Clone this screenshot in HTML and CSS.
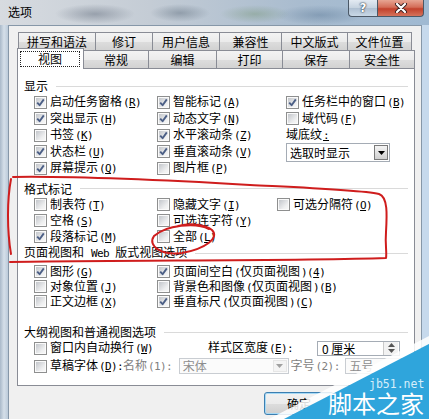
FILE: index.html
```html
<!DOCTYPE html>
<html lang="zh-CN">
<head>
<meta charset="utf-8">
<title>选项</title>
<link rel="stylesheet" href="styles.css">
</head>
<body>
<div class="screen">
  <div class="titlebar">
    <span class="title">选项</span>
    <div class="caption">
      <span class="cap-btn help">?</span>
      <span class="cap-btn close">
        <svg width="14" height="10" viewBox="0 0 14 10"><path d="M3 1 L11 9 M11 1 L3 9" stroke="#3b1f1f" stroke-width="4" stroke-linecap="round"/><path d="M3 1 L11 9 M11 1 L3 9" stroke="#fff" stroke-width="2.2" stroke-linecap="round"/></svg>
      </span>
    </div>
  </div>
  <div class="frame">
    <div class="client">
      <div class="tabs">
        <div class="tabrow back">
          <div class="tab" style="width:78px">拼写和语法</div>
          <div class="tab" style="width:58px">修订</div>
          <div class="tab" style="width:68px">用户信息</div>
          <div class="tab" style="width:63px">兼容性</div>
          <div class="tab" style="width:67px">中文版式</div>
          <div class="tab" style="width:65px">文件位置</div>
        </div>
        <div class="tabrow front">
          <div class="tab sel" style="width:67px"><span class="focus">视图</span></div>
          <div class="tab" style="width:66px">常规</div>
          <div class="tab" style="width:69px">编辑</div>
          <div class="tab" style="width:67px">打印</div>
          <div class="tab" style="width:68px">保存</div>
          <div class="tab" style="width:66px">安全性</div>
        </div>
      </div>
      <div class="panel">
        <section class="group g1">
          <div class="heading"><span>显示</span></div>
          <div class="grid cols-a">
            <label class="cb"><span class="box"><svg viewBox="0 0 9 9"><path d="M1.2 4.6 L3.6 7.2 L7.8 1.4"/></svg></span><span>启动任务窗格<span class="k">(<u>R</u>)</span></span></label>
            <label class="cb"><span class="box"><svg viewBox="0 0 9 9"><path d="M1.2 4.6 L3.6 7.2 L7.8 1.4"/></svg></span><span>智能标记<span class="k">(<u>A</u>)</span></span></label>
            <label class="cb"><span class="box"><svg viewBox="0 0 9 9"><path d="M1.2 4.6 L3.6 7.2 L7.8 1.4"/></svg></span><span>任务栏中的窗口<span class="k">(<u>B</u>)</span></span></label>

            <label class="cb"><span class="box"><svg viewBox="0 0 9 9"><path d="M1.2 4.6 L3.6 7.2 L7.8 1.4"/></svg></span><span>突出显示<span class="k">(<u>H</u>)</span></span></label>
            <label class="cb"><span class="box"><svg viewBox="0 0 9 9"><path d="M1.2 4.6 L3.6 7.2 L7.8 1.4"/></svg></span><span>动态文字<span class="k">(<u>N</u>)</span></span></label>
            <label class="cb"><span class="box"></span><span>域代码<span class="k">(<u>F</u>)</span></span></label>

            <label class="cb"><span class="box"></span><span>书签<span class="k">(<u>K</u>)</span></span></label>
            <label class="cb"><span class="box"><svg viewBox="0 0 9 9"><path d="M1.2 4.6 L3.6 7.2 L7.8 1.4"/></svg></span><span>水平滚动条<span class="k">(<u>Z</u>)</span></span></label>
            <div class="plain"><span>域底纹<span class="k"><u>:</u></span></span></div>

            <label class="cb"><span class="box"><svg viewBox="0 0 9 9"><path d="M1.2 4.6 L3.6 7.2 L7.8 1.4"/></svg></span><span>状态栏<span class="k">(<u>U</u>)</span></span></label>
            <label class="cb"><span class="box"><svg viewBox="0 0 9 9"><path d="M1.2 4.6 L3.6 7.2 L7.8 1.4"/></svg></span><span>垂直滚动条<span class="k">(<u>V</u>)</span></span></label>
            <div class="combo"><span class="combo-text">选取时显示</span><span class="drop"><svg width="7" height="4" viewBox="0 0 7 4"><path d="M0 0 H7 L3.5 4 Z" fill="#000"/></svg></span></div>

            <label class="cb"><span class="box"><svg viewBox="0 0 9 9"><path d="M1.2 4.6 L3.6 7.2 L7.8 1.4"/></svg></span><span>屏幕提示<span class="k">(<u>Q</u>)</span></span></label>
            <label class="cb"><span class="box"></span><span>图片框<span class="k">(<u>P</u>)</span></span></label>
          </div>
        </section>

        <section class="group g2">
          <div class="heading"><span>格式标记</span></div>
          <div class="grid cols-b">
            <label class="cb"><span class="box"></span><span>制表符<span class="k">(<u>T</u>)</span></span></label>
            <label class="cb"><span class="box"></span><span>隐藏文字<span class="k">(<u>I</u>)</span></span></label>
            <label class="cb"><span class="box"></span><span>可选分隔符<span class="k">(<u>O</u>)</span></span></label>

            <label class="cb"><span class="box"></span><span>空格<span class="k">(<u>S</u>)</span></span></label>
            <label class="cb"><span class="box"></span><span>可选连字符<span class="k">(<u>Y</u>)</span></span></label>
            <span></span>

            <label class="cb"><span class="box"><svg viewBox="0 0 9 9"><path d="M1.2 4.6 L3.6 7.2 L7.8 1.4"/></svg></span><span>段落标记<span class="k">(<u>M</u>)</span></span></label>
            <label class="cb"><span class="box"></span><span>全部<span class="k">(<u>L</u>)</span></span></label>
          </div>
        </section>

        <section class="group g3">
          <div class="heading"><span>页面视图和<span class="k">&nbsp;Web&nbsp;</span>版式视图选项</span></div>
          <div class="grid cols-c">
            <label class="cb"><span class="box"><svg viewBox="0 0 9 9"><path d="M1.2 4.6 L3.6 7.2 L7.8 1.4"/></svg></span><span>图形<span class="k">(<u>G</u>)</span></span></label>
            <label class="cb"><span class="box"><svg viewBox="0 0 9 9"><path d="M1.2 4.6 L3.6 7.2 L7.8 1.4"/></svg></span><span>页面间空白<span class="k">(</span>仅页面视图<span class="k">)(<u>4</u>)</span></span></label>

            <label class="cb"><span class="box"></span><span>对象位置<span class="k">(<u>J</u>)</span></span></label>
            <label class="cb"><span class="box"></span><span>背景色和图像<span class="k">(</span>仅页面视图<span class="k">)(<u>B</u>)</span></span></label>

            <label class="cb"><span class="box"></span><span>正文边框<span class="k">(<u>X</u>)</span></span></label>
            <label class="cb"><span class="box"><svg viewBox="0 0 9 9"><path d="M1.2 4.6 L3.6 7.2 L7.8 1.4"/></svg></span><span>垂直标尺<span class="k">(</span>仅页面视图<span class="k">)(<u>C</u>)</span></span></label>
          </div>
        </section>

        <section class="group g4">
          <div class="heading"><span>大纲视图和普通视图选项</span></div>
          <div class="row r1">
            <label class="cb wrap-w"><span class="box"></span><span>窗口内自动换行<span class="k">(<u>W</u>)</span></span></label>
            <span class="lbl style-w"><span>样式区宽度<span class="k">(<u>E</u>):</span></span></span>
            <div class="spin"><span class="spin-text">0&nbsp;厘米</span><span class="spin-btns"><svg width="7" height="4" viewBox="0 0 7 4"><path d="M0 4 H7 L3.5 0 Z" fill="#555"/></svg><svg width="7" height="4" viewBox="0 0 7 4"><path d="M0 0 H7 L3.5 4 Z" fill="#555"/></svg></span></div>
          </div>
          <div class="row r2">
            <label class="cb draft-w"><span class="box"></span><span>草稿字体<span class="k">(<u>D</u>):</span></span></label>
            <span class="lbl dis name-w"><span>名称<span class="k">(1):</span></span></span>
            <div class="combo dis-combo"><span class="combo-text">宋体</span><span class="drop flat"><svg width="7" height="4" viewBox="0 0 7 4"><path d="M0 0 H7 L3.5 4 Z" fill="#a0a0a0"/></svg></span></div>
            <span class="lbl dis size-w"><span>字号<span class="k">(2):</span></span></span>
            <div class="combo dis-combo small"><span class="combo-text">五号</span></div>
          </div>
        </section>
      </div>
      <div class="buttons">
        <span class="btn ok">确定</span>
        <span class="btn">取消</span>
      </div>
    </div>
  </div>

  <svg class="annot" width="429" height="419" viewBox="0 0 429 419">
    <path d="M13 177 C80 176 180 181 250 185 C310 188 360 190 379 194 C388 197 387 215 386 232 C385 245 387 252 386 258 C300 261 120 260 10 262" />
    <path d="M11 179 C7 200 7 230 11 254" />
    <path d="M209 229 C196 222 166 225 154 236 C147 246 162 256 182 253 C205 249 220 238 212 230 C205 224 190 223 178 226" />
  </svg>

  <div class="watermark">
    <svg width="160" height="90" viewBox="0 0 160 90">
      <polygon points="0,90 160,7 160,15 15,90" fill="#ffffff" opacity="0.85"/>
      <polygon points="15,90 160,15 160,90" fill="#2fa5dc"/>
    </svg>
    <span class="wm-url">jb51.net</span>
    <span class="wm-name">脚本之家</span>
  </div>
</div>
</body>
</html>
```

FILE: styles.css
```css
* { box-sizing: border-box; }
html, body { margin: 0; padding: 0; }
body {
  width: 429px;
  height: 419px;
  overflow: hidden;
  font-family: "Noto Sans CJK SC", sans-serif;
  font-size: 12px;
  color: #000;
}
.screen {
  position: relative;
  width: 429px;
  height: 419px;
  overflow: hidden;
  background: #c6d9ec;
}

/* title bar */
.titlebar {
  height: 25px;
  display: flex;
  align-items: flex-start;
  background:
    radial-gradient(ellipse 40px 10px at 95px 14px, rgba(110,120,135,0.55), transparent),
    radial-gradient(ellipse 30px 9px at 180px 13px, rgba(100,115,130,0.5), transparent),
    radial-gradient(ellipse 35px 9px at 255px 14px, rgba(120,150,120,0.45), transparent),
    radial-gradient(ellipse 45px 10px at 320px 15px, rgba(90,120,150,0.45), transparent),
    linear-gradient(to right, #d7dbe0 0%, #c4ccd5 35%, #a9bccf 70%, #9fb9d2 100%);
}
.title {
  padding-left: 8px;
  line-height: 24px;
  font-size: 12px;
  color: #000;
}
.caption {
  margin-left: auto;
  margin-right: 5px;
  display: flex;
  height: 17px;
}
.cap-btn {
  height: 17px;
  display: flex;
  align-items: center;
  justify-content: center;
  border: 1px solid #4b5866;
  border-top: none;
}
.help {
  width: 29px;
  border-radius: 0 0 0 4px;
  border-right: none;
  background: linear-gradient(#e3eaf2, #c5d2df 50%, #aebfd1 51%, #c9d8e6);
  color: #fff;
  font-family: "DejaVu Sans", sans-serif;
  font-weight: bold;
  font-size: 12px;
  line-height: 14px;
  text-shadow: 0 0 2px #1e2c3c, 0 0 1px #1e2c3c;
}
.close {
  width: 47px;
  border-radius: 0 0 4px 0;
  background: linear-gradient(#e7a593, #d46d58 45%, #c2412c 55%, #d5735c);
}

/* window frame */
.frame {
  display: flex;
  height: 394px;
  padding-left: 8px;
  background: linear-gradient(to right, #a9b9c9 0, #d5dfe9 4px, #bccbda 8px, #c6d9ec 8px);
}
.client {
  width: 414px;
  height: 394px;
  background: #f0f0f0;
  border: 1px solid #8697a8;
  border-bottom: none;
  padding: 6px 6px 0 8px;
}

/* tabs */
.tabs { display: flex; flex-direction: column; }
.tabrow { display: flex; height: 18px; }
.tabrow.back { margin-left: 1px; }
.tab {
  height: 18px;
  margin-right: -1px;
  border: 1px solid #898c95;
  border-bottom: none;
  background: linear-gradient(#f3f3f3, #ebebeb 50%, #dddddd 51%, #d2d2d2);
  display: flex;
  align-items: center;
  justify-content: center;
  line-height: 16px;
  white-space: nowrap;
}
.tab.sel {
  height: 21px;
  margin-top: -2px;
  margin-bottom: -1px;
  position: relative;
  z-index: 2;
  background: #fff;
  align-items: stretch;
}
.focus {
  flex: 1;
  margin: 2px 3px 2px 2px;
  border: 1px dotted #222;
  display: flex;
  align-items: center;
  justify-content: center;
}

/* panel */
.panel {
  width: 398px;
  height: 318px;
  border: 1px solid #898c95;
  background: #fff;
}
.heading {
  display: flex;
  align-items: center;
  height: 16px;
  line-height: 16px;
  padding: 0 6px;
  white-space: nowrap;
}
.heading::after {
  content: "";
  flex: 1;
  height: 1px;
  margin-left: 8px;
  background: #dadada;
}
.g1 .heading { margin-top: 9px; }
.g2 .heading { margin-top: 4px; }
.g3 .heading { margin-top: 0.5px; }
.g4 .heading { margin-top: 15px; }

.grid {
  display: grid;
  padding-left: 16px;
}
.cols-a { grid-template-columns: 123px 129px 1fr; grid-auto-rows: 16.5px; }
.cols-b { grid-template-columns: 123px 120px 1fr; grid-auto-rows: 16px; }
.cols-c { grid-template-columns: 123px 1fr; grid-auto-rows: 15px; margin-top: 3px; }
.cols-c .cb { line-height: 15px; }

.cb, .plain, .lbl {
  display: flex;
  align-items: center;
  white-space: nowrap;
  line-height: 16px;
}
.k {
  font-family: "DejaVu Sans Mono", monospace;
  font-size: 11px;
  letter-spacing: -0.6px;
  margin-left: 1px;
}
.box {
  flex: none;
  width: 13px;
  height: 13px;
  margin-right: 3px;
  border: 1px solid #8e8f8f;
  padding: 1px;
  background: linear-gradient(135deg, #c3c6cb, #eeeff0 70%, #f7f7f7) content-box, #fafafa;
  display: flex;
  align-items: center;
  justify-content: center;
}
.box svg { width: 9px; height: 9px; }
.box path {
  fill: none;
  stroke: #4c5f86;
  stroke-width: 1.9;
  stroke-linejoin: round;
}

.combo {
  width: 104px;
  height: 19px;
  border: 1px solid #a5acb5;
  background: #fff;
  display: flex;
  align-items: stretch;
  align-self: start;
  margin-top: -0.5px;
}
.combo-text {
  flex: 1;
  padding-left: 3px;
  line-height: 17px;
  white-space: nowrap;
  overflow: hidden;
}
.drop {
  width: 14px;
  margin: 1px;
  border: 1px solid #7a7a7a;
  background: linear-gradient(#f4f4f4, #e2e2e2 50%, #d0d0d0);
  display: flex;
  align-items: center;
  justify-content: center;
}
.drop.flat {
  border: 1px solid #e6e6e6;
  background: #f4f4f4;
  margin: 1px 1px 1px 0;
}

/* bottom group rows */
.row {
  display: flex;
  align-items: center;
  height: 16px;
  padding-left: 16px;
}
.r2 { margin-top: 2px; }
.wrap-w { width: 174px; }
.style-w { width: 109px; }
.spin {
  width: 83px;
  height: 15px;
  border: 1px solid #a5acb5;
  background: #fff;
  display: flex;
}
.spin-text {
  flex: 1;
  padding-left: 4px;
  line-height: 13px;
  white-space: nowrap;
}
.spin-btns {
  width: 15px;
  margin: 0 1px 0 0;
  border-left: 1px solid #c9c9c9;
  background: #f2f2f2;
  display: flex;
  flex-direction: column;
  align-items: center;
  justify-content: space-evenly;
}
.draft-w { width: 89px; }
.name-w { width: 57px; }
.size-w { width: 56px; margin-left: 2px; }
.dis { color: #7f7f7f; }
.dis-combo {
  width: 112px;
  height: 16px;
  margin-top: 0;
  align-self: center;
  border-color: #c9cdd2;
  color: #8d8d8d;
  background: #fbfbfb;
}
.dis-combo .combo-text { line-height: 14px; overflow: visible; }
.dis-combo.small { width: 70px; }

/* buttons */
.buttons {
  display: flex;
  justify-content: flex-end;
  gap: 6px;
  margin-top: 6px;
  padding-right: 0;
}
.btn {
  width: 75px;
  height: 23px;
  border: 1px solid #707070;
  border-radius: 3px;
  background: linear-gradient(#f2f2f2, #ebebeb 50%, #dddddd 51%, #cfcfcf);
  display: flex;
  align-items: center;
  justify-content: center;
}
.btn.ok {
  width: 70px;
  border-color: #3c7fb1;
  box-shadow: inset 0 0 0 1px #a6d9f5;
}

/* hand-drawn annotation over the screenshot */
.annot {
  position: absolute;
  left: 0;
  top: 0;
  pointer-events: none;
}
.annot path {
  fill: none;
  stroke: #cf1d1d;
  stroke-width: 2;
  stroke-linecap: round;
  stroke-linejoin: round;
}

/* watermark */
.watermark {
  position: absolute;
  right: 0;
  bottom: 0;
  width: 160px;
  height: 90px;
}
.watermark svg { position: absolute; left: 0; top: 0; }
.wm-url {
  position: absolute;
  left: 100px;
  top: 48px;
  font-family: "DejaVu Sans Mono", monospace;
  font-size: 11.5px;
  line-height: 14px;
  color: #d6eefa;
}
.wm-name {
  position: absolute;
  left: 59px;
  top: 62px;
  font-family: "Noto Sans CJK SC", sans-serif;
  font-size: 24px;
  line-height: 24px;
  color: #fff;
  white-space: nowrap;
}
```
